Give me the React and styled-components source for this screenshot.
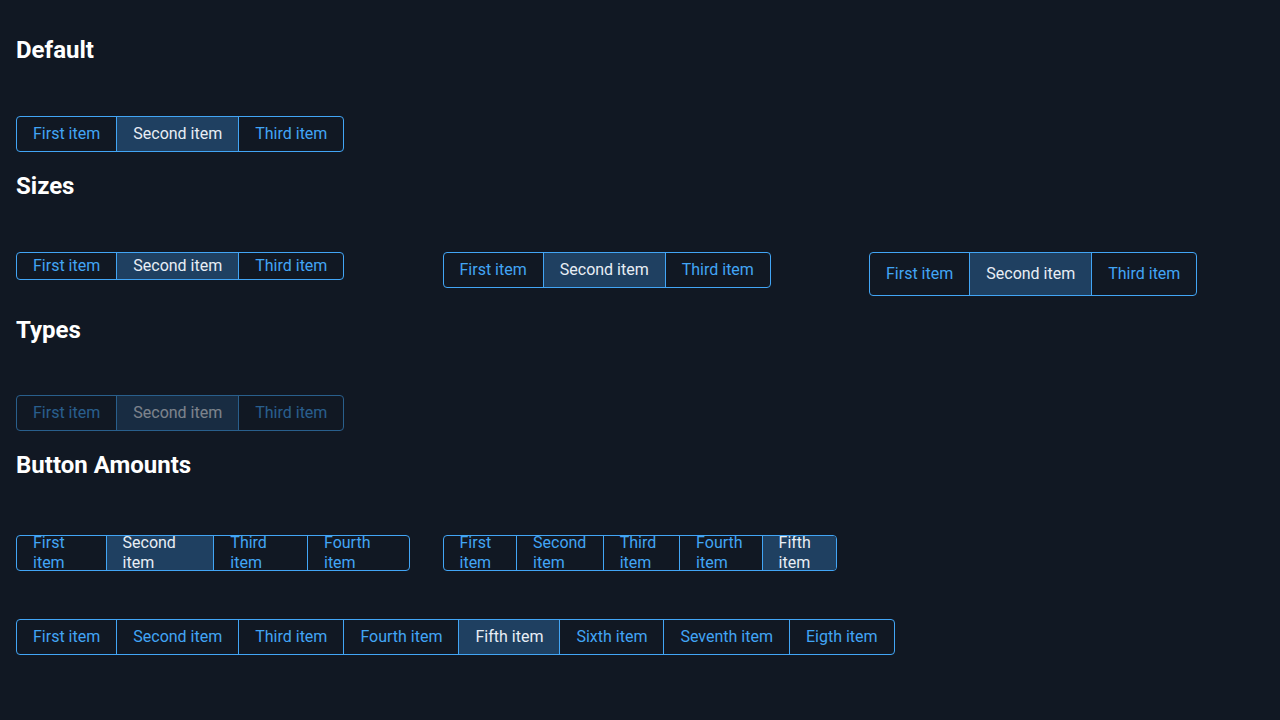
import React from "react";
import styled, { createGlobalStyle, css } from "styled-components";

const GlobalStyle = createGlobalStyle`
  html, body {
    margin: 0;
    padding: 0;
    background: #111823;
  }
  body {
    font-family: Roboto, "Liberation Sans", sans-serif;
    color: #f5f7fa;
  }
`;

const Page = styled.main`
  padding: 16px 16px 40px;
  min-height: 720px;
  box-sizing: border-box;
  background: #111823;
`;

const Section = styled.section`
  display: flex;
  flex-direction: column;
  padding-top: 18px;
`;

const Heading = styled.h2`
  margin: 0;
  font-size: 24px;
  line-height: 32px;
  font-weight: 700;
  color: #ffffff;
`;

const Content = styled.div`
  margin-top: ${(p) => p.$offset ?? 50}px;
  display: flex;
  flex-direction: column;
  gap: 48px;
`;

const Columns = styled.div`
  display: grid;
  grid-template-columns: repeat(3, 394px);
  column-gap: 32.5px;
  align-items: start;
`;

const Group = styled.div`
  display: flex;
  width: fit-content;
  max-width: 100%;
  box-sizing: border-box;
  border: 1px solid #42a5f5;
  border-radius: 4px;
  overflow: hidden;
  ${(p) =>
    p.$muted &&
    css`
      opacity: 0.5;
    `}
`;

const heights = { sm: 26, md: 34, lg: 42 };

const Item = styled.button`
  display: flex;
  align-items: center;
  flex: 0 1 auto;
  height: ${(p) => heights[p.$size || "md"]}px;
  padding: 0 16px;
  margin: 0;
  border: 0;
  border-left: 1px solid #42a5f5;
  &:first-child {
    border-left: 0;
  }
  background: ${(p) => (p.$active ? "#1f4061" : "transparent")};
  color: ${(p) => (p.$active ? "#e8eef5" : "#42a5f5")};
  font-family: Roboto, "Liberation Sans", sans-serif;
  font-size: 16px;
  line-height: 20px;
  text-align: left;
  cursor: pointer;
  white-space: normal;
`;

const ButtonGroup = ({ items, active, size, muted }) => (
  <Group $muted={muted}>
    {items.map((label, i) => (
      <Item key={label} $active={i === active} $size={size}>
        <span>{label}</span>
      </Item>
    ))}
  </Group>
);

const three = ["First item", "Second item", "Third item"];
const four = [...three, "Fourth item"];
const five = [...four, "Fifth item"];
const eight = [...five, "Sixth item", "Seventh item", "Eigth item"];

export default function App() {
  return (
    <>
      <GlobalStyle />
      <Page>
        <Section>
          <Heading>Default</Heading>
          <Content>
            <ButtonGroup items={three} active={1} />
          </Content>
        </Section>
        <Section>
          <Heading>Sizes</Heading>
          <Content>
            <Columns>
              <ButtonGroup items={three} active={1} size="sm" />
              <ButtonGroup items={three} active={1} size="md" />
              <ButtonGroup items={three} active={1} size="lg" />
            </Columns>
          </Content>
        </Section>
        <Section>
          <Heading>Types</Heading>
          <Content $offset={49}>
            <ButtonGroup items={three} active={1} muted />
          </Content>
        </Section>
        <Section>
          <Heading>Button Amounts</Heading>
          <Content $offset={54}>
            <Columns>
              <ButtonGroup items={four} active={1} />
              <ButtonGroup items={five} active={4} />
            </Columns>
            <ButtonGroup items={eight} active={4} />
          </Content>
        </Section>
      </Page>
    </>
  );
}
